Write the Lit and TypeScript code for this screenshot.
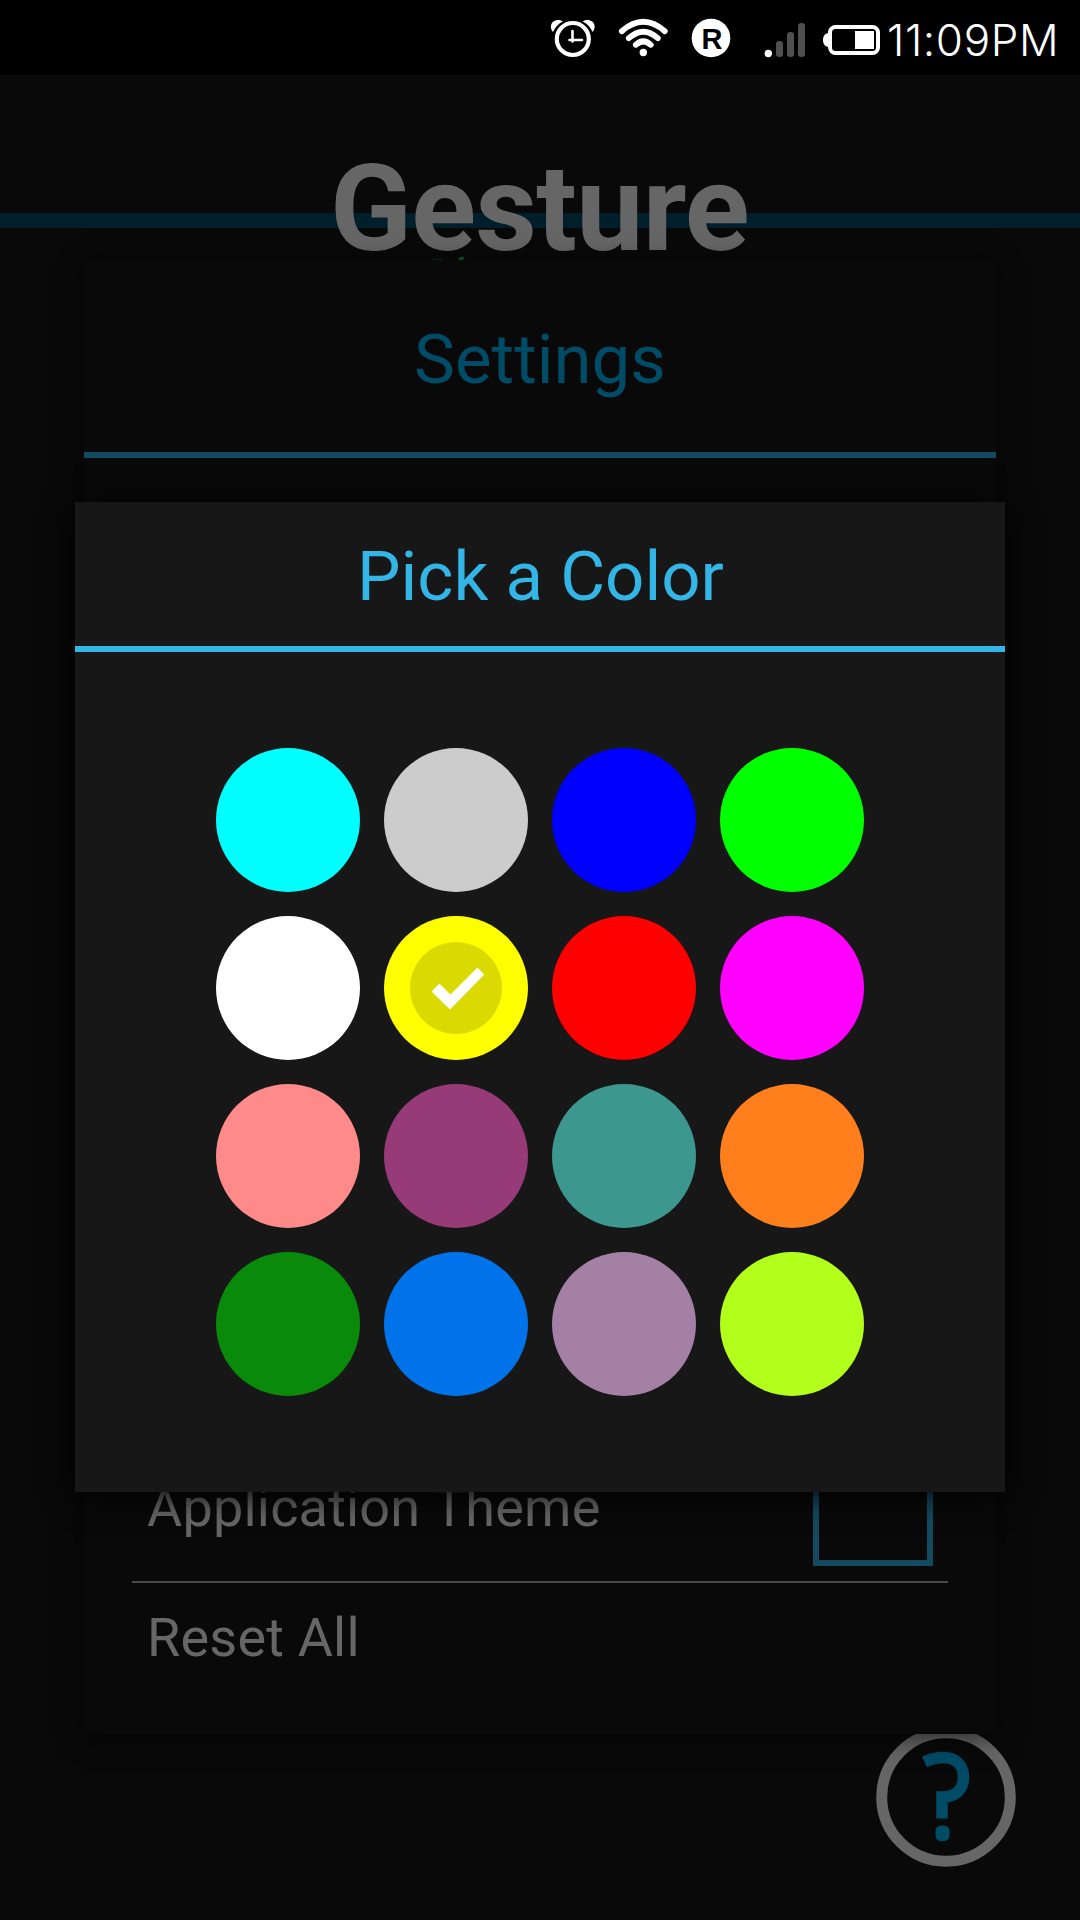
import { LitElement, html, css, nothing } from "lit";
import { customElement, property, state } from "lit/decorators.js";

const COLORS = [
  "#00ffff", "#cccccc", "#0000ff", "#00ff00",
  "#ffffff", "#ffff00", "#ff0000", "#ff00ff",
  "#ff8a8a", "#963a78", "#3c988e", "#ff7f1c",
  "#0a8a0a", "#0073ea", "#a481a4", "#b2ff1c",
];

@customElement("status-bar")
class StatusBar extends LitElement {
  static styles = css`
    :host { display: flex; justify-content: flex-end; height: 75px; background: #000; color: #fff; }
    .icons { display: block; width: 350px; height: 75px; }
    .mark { font: 700 29px "Liberation Sans", Arial, sans-serif; fill: #000; }
    .clock {
      width: 200px; box-sizing: border-box; padding-left: 7px;
      font: 300 44px/80px Inter, sans-serif; letter-spacing: 0.6px; white-space: nowrap;
    }
  `;
  render() {
    return html`
      <svg class="icons" viewBox="530 0 350 75" fill="none">
        <g stroke="#fff" stroke-linecap="round">
          <circle cx="572.800" cy="39" r="16" stroke-width="4.200"/>
          <path d="M572.500 31V41.500M569.500 40H582" stroke-width="2.600"/>
        </g>
        <path d="M553 32C549.500 28 550.500 22 555.500 20.500C558.500 19.500 561.500 20.300 563 21.500C558.500 23.500 555 27.500 553 32ZM592.600 32C596.100 28 595.100 22 590.100 20.500C587.100 19.500 584.100 20.300 582.600 21.500C587.100 23.500 590.600 27.500 592.600 32Z" fill="#fff"/>
        <g stroke="#fff" stroke-width="5.800" stroke-linecap="round">
          <path d="M621.800 31.200Q643.300 12.500 664.800 31.200"/>
          <path d="M628.800 38.200Q643.300 25.200 657.800 38.200"/>
          <path d="M635.800 44.800Q643.300 38 650.800 44.800"/>
        </g>
        <circle cx="643.300" cy="52.500" r="3.700" fill="#fff"/>
        <circle cx="711" cy="38" r="19.300" fill="#fff"/>
        <text class="mark" x="712" y="49" text-anchor="middle">R</text>
        <circle cx="768.300" cy="53.500" r="3.700" fill="#fff"/>
        <g fill="#505050">
          <rect x="776" y="41" width="7" height="16" rx="3"/>
          <rect x="787" y="32" width="7" height="25" rx="3"/>
          <rect x="798" y="23" width="7" height="34" rx="3"/>
        </g>
        <rect x="830" y="27" width="48" height="26" rx="5.500" stroke="#fff" stroke-width="4"/>
        <path d="M829 33C825 33 823 36 823 40S825 47 829 47Z" fill="#fff"/>
        <rect x="855" y="31" width="19" height="18" fill="#fff"/>
      </svg>
      <div class="clock">11:09PM</div>
    `;
  }
}

@customElement("color-swatch")
class ColorSwatch extends LitElement {
  @property() color = "";
  @property({ type: Boolean }) selected = false;
  static styles = css`
    :host { display: block; }
    .dot { display: block; width: 144px; height: 144px; padding: 0; border: 0; border-radius: 50%; }
    .tick { display: block; width: 144px; height: 144px; }
  `;
  render() {
    return html`<button class="dot" style="background:${this.color}">
      ${this.selected
        ? html`<svg class="tick" viewBox="0 0 144 144">
            <circle cx="72" cy="72" r="46" fill="#dada00"/>
            <path d="M47.500 75.500L55.500 67.500L66.500 78.500L93.500 51.500L100.300 58.500L66 93.500Z" fill="#fff"/>
          </svg>`
        : nothing}
    </button>`;
  }
}

@customElement("app-root")
class AppRoot extends LitElement {
  @state() private selected = 5;

  static styles = css`
    :host { display: block; font-family: Roboto, sans-serif; }
    .screen {
      position: relative; width: 1080px; height: 1920px; overflow: hidden;
      display: flex; flex-direction: column; background: #090909;
    }
    .hero {
      height: 185px; display: flex; justify-content: center;
      background: linear-gradient(#001f2a, #001f2a) 0 138px / 100% 15px no-repeat;
    }
    .brand {
      margin: 0; padding-top: 64px; font-size: 120px; line-height: 141px; font-weight: 700;
      letter-spacing: -0.7px; text-indent: -1px; color: #666; white-space: nowrap;
    }
    .trace { display: block; width: 1080px; height: 4px; margin-top: -3px; }
    .grow { flex: 1; }
    .help {
      align-self: flex-end; width: 140px; height: 140px; margin: 0 64px 53px 0;
      padding: 0; border: 0; background: transparent;
    }
    .help-icon { display: block; width: 140px; height: 140px; }
    .settings {
      position: absolute; left: 84px; top: 260px; width: 912px; height: 1474px;
      display: flex; flex-direction: column; background: #090909;
      box-shadow: 0 4px 24px rgba(0, 0, 0, 0.6);
    }
    .settings-head {
      height: 192px; border-bottom: 6px solid #144a5f; text-align: center;
      font-size: 69px; line-height: 199px; color: #004b66;
    }
    .rows { margin: auto 48px 0; padding-bottom: 43px; color: #666; font-size: 54px; }
    .row {
      display: flex; justify-content: space-between; align-items: center;
      padding: 0 15px 0 15px; height: 150px; white-space: nowrap;
    }
    .label { padding-top: 3px; letter-spacing: 0.2px; }
    .row.theme { border-bottom: 2px solid #484848; }
    .row.reset { height: 108px; }
    .row.reset .label { padding-top: 0; }
    .box { box-sizing: border-box; width: 120px; height: 120px; border: 6px solid #144a5f; }
    .picker {
      position: absolute; left: 75px; top: 502px; width: 930px; height: 990px;
      background: #171717; box-shadow: 0 4px 28px rgba(0, 0, 0, 0.95);
    }
    .picker-head {
      height: 144px; border-bottom: 6px solid #33b5e5; text-align: center;
      font-size: 69px; line-height: 150px; color: #33b5e5; text-indent: 1px;
    }
    .swatches {
      display: grid; grid-template-columns: repeat(4, 144px); gap: 24px;
      justify-content: center; padding: 96px 0;
    }
  `;

  render() {
    return html`
      <div class="screen">
        <status-bar></status-bar>
        <header class="hero"><h1 class="brand">Gesture</h1></header>
        <svg class="trace" viewBox="0 257 1080 4">
          <path d="M433 259H442V260H433Z" fill="#043a1c"/>
          <path d="M459.500 257H464.500L463 260H458.500Z" fill="#066028"/>
        </svg>
        <div class="grow"></div>
        <button class="help">
          <svg class="help-icon" viewBox="876 1727 140 140" fill="none">
            <circle cx="946" cy="1797" r="64.300" stroke="#666" stroke-width="11"/>
            <path d="M924.500 1762C932 1758.300 937 1757.500 943.500 1757.500C956.500 1757.500 963.500 1766 963.500 1777C963.500 1789 956 1797 942 1797V1818.500" stroke="#004b66" stroke-width="11.500"/>
            <rect x="935.500" y="1825.500" width="14" height="15.500" rx="5.500" fill="#004b66"/>
          </svg>
        </button>

        <section class="settings">
          <div class="settings-head">Settings</div>
          <div class="rows">
            <div class="row theme"><span class="label">Application Theme</span><span class="box"></span></div>
            <div class="row reset"><span class="label">Reset All</span></div>
          </div>
        </section>

        <section class="picker">
          <div class="picker-head">Pick a Color</div>
          <div class="swatches">
            ${COLORS.map((c, i) => html`<color-swatch
              .color=${c}
              .selected=${i === this.selected}
              @click=${() => (this.selected = i)}
            ></color-swatch>`)}
          </div>
        </section>
      </div>
    `;
  }
}
